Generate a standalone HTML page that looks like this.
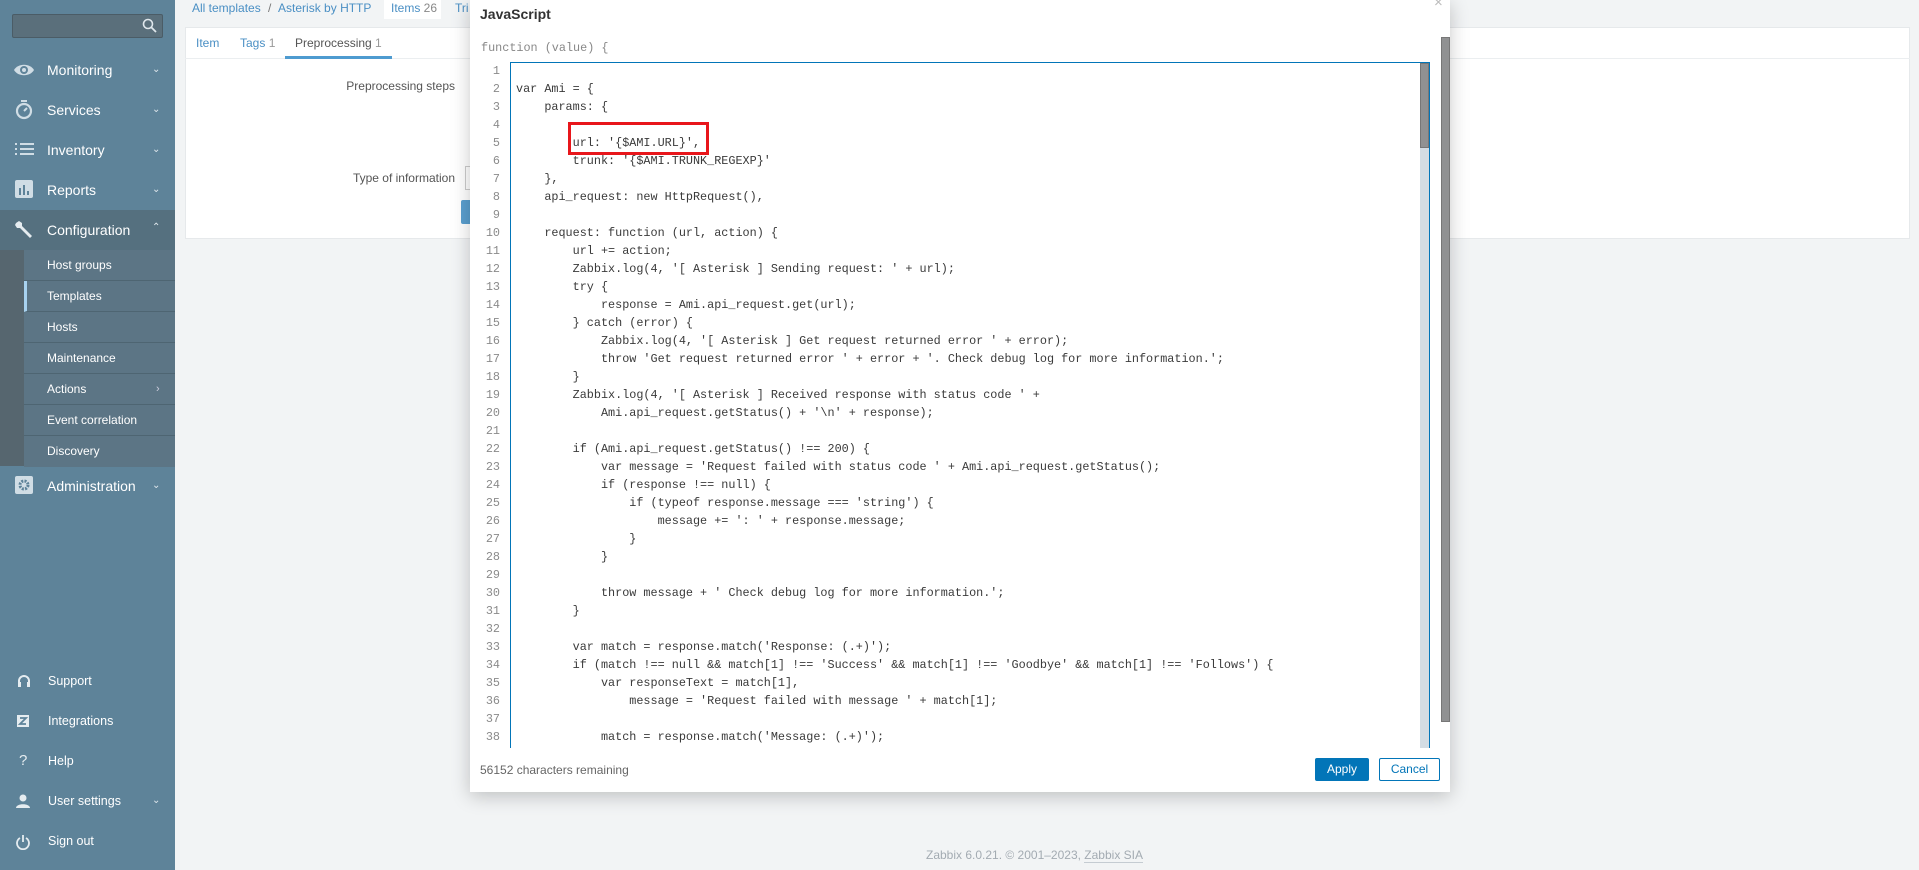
<!DOCTYPE html>
<html><head><meta charset="utf-8"><style>
*{box-sizing:border-box;margin:0;padding:0}
body{width:1919px;height:870px;overflow:hidden;background:#f2f4f5;font-family:"Liberation Sans",Arial,sans-serif;position:relative}
.a{position:absolute}
#side{left:0;top:0;width:175px;height:870px;background:#5e8399}
.mi{position:absolute;left:0;width:175px;height:40px;color:#fff;font-size:14px;line-height:40px}
.mi .t{position:absolute;left:47px}
.mi .ch{position:absolute;left:152px;font-size:10px;color:#dfe7ec}
.mi svg{position:absolute;left:13px;top:10px}
.sub{position:absolute;left:24px;width:151px;height:31px;line-height:30px;color:#fff;font-size:12px;padding-left:23px;border-bottom:1px solid #4e6572;background:#5c7585}
.bi{position:absolute;left:0;width:175px;height:40px;line-height:40px;color:#fff;font-size:12.5px}
.bi .t{position:absolute;left:48px}
.bi svg{position:absolute;left:16px;top:13px}
pre{font-family:"Liberation Mono","Courier New",monospace;font-size:11.8px;line-height:18px}
</style></head><body>
<div id="side" class="a">
 <div class="a" style="left:12px;top:14px;width:151px;height:24px;background:#5a6f7b;border:1px solid #4b5c66;border-radius:2px"></div>
 <svg class="a" style="left:142px;top:18px" width="15" height="15" viewBox="0 0 15 15"><circle cx="6" cy="6" r="4.5" fill="none" stroke="#dfe7ec" stroke-width="1.6"/><path d="M9.5 9.5L14 14" stroke="#dfe7ec" stroke-width="1.8"/></svg>
 <div class="mi" style="top:50px"><svg width="22" height="20" viewBox="0 0 22 20"><path d="M1 10C5 3 17 3 21 10C17 17 5 17 1 10Z" fill="#d0dde5"/><circle cx="11" cy="10" r="4" fill="#5e8399"/><circle cx="11" cy="10" r="2" fill="#d0dde5"/></svg><span class="t">Monitoring</span><span class="ch">&#8964;</span></div>
 <div class="mi" style="top:90px"><svg width="22" height="20" viewBox="0 0 22 20"><circle cx="11" cy="11" r="7" fill="none" stroke="#d0dde5" stroke-width="2.2"/><path d="M8 1h6M11 11l3-3" stroke="#d0dde5" stroke-width="2"/></svg><span class="t">Services</span><span class="ch">&#8964;</span></div>
 <div class="mi" style="top:130px"><svg width="22" height="20" viewBox="0 0 22 20"><path d="M2 4h2M2 9h2M2 14h2M7 4h14M7 9h14M7 14h14" stroke="#d0dde5" stroke-width="2"/></svg><span class="t">Inventory</span><span class="ch">&#8964;</span></div>
 <div class="mi" style="top:170px"><svg width="22" height="20" viewBox="0 0 22 20"><rect x="2" y="0" width="18" height="18" rx="2" fill="#d0dde5"/><path d="M7 8v7M11 5v10M15 11v4" stroke="#5e8399" stroke-width="2"/></svg><span class="t">Reports</span><span class="ch">&#8964;</span></div>
 <div class="mi" style="top:210px;background:#55707f"><svg width="22" height="20" viewBox="0 0 22 20"><path d="M3 3l3-2 3 2v3l10 10-2 2L7 8H4L2 5z" fill="#e5ecf0"/></svg><span class="t">Configuration</span><span class="ch" style="top:-2px">&#8963;</span></div>
 <div class="a" style="left:0;top:250px;width:24px;height:216px;background:#56666f"></div>
 <div class="sub" style="top:250px">Host groups</div>
 <div class="sub" style="top:281px;border-left:3px solid #a8d2ef;padding-left:20px">Templates</div>
 <div class="sub" style="top:312px">Hosts</div>
 <div class="sub" style="top:343px">Maintenance</div>
 <div class="sub" style="top:374px">Actions<span style="position:absolute;left:132px;font-size:11px;color:#ccd">&rsaquo;</span></div>
 <div class="sub" style="top:405px">Event correlation</div>
 <div class="sub" style="top:436px;border-bottom:none">Discovery</div>
 <div class="mi" style="top:466px"><svg width="22" height="20" viewBox="0 0 22 20"><rect x="2" y="0" width="18" height="18" rx="2" fill="#d0dde5"/><circle cx="11" cy="9" r="4" fill="none" stroke="#5e8399" stroke-width="3" stroke-dasharray="2 1.2"/></svg><span class="t">Administration</span><span class="ch">&#8964;</span></div>
 <div class="bi" style="top:661px"><svg width="16" height="16" viewBox="0 0 16 16"><path d="M3 11V7a5 5 0 0 1 10 0v4" fill="none" stroke="#e5ecf0" stroke-width="2"/><rect x="2" y="8" width="3" height="5" fill="#e5ecf0"/><rect x="11" y="8" width="3" height="5" fill="#e5ecf0"/></svg><span class="t">Support</span></div>
 <div class="bi" style="top:701px"><svg width="16" height="16" viewBox="0 0 16 16"><rect x="1" y="1" width="12" height="12" fill="#e5ecf0"/><path d="M4 4h6L4 10h6" fill="none" stroke="#5e8399" stroke-width="1.8"/></svg><span class="t">Integrations</span></div>
 <div class="bi" style="top:741px"><span style="position:absolute;left:19px;font-size:15px;color:#e5ecf0">?</span><span class="t">Help</span></div>
 <div class="bi" style="top:781px"><svg width="16" height="16" viewBox="0 0 16 16"><circle cx="7" cy="4" r="3.5" fill="#e5ecf0"/><path d="M0 14c0-5 14-5 14 0z" fill="#e5ecf0"/></svg><span class="t">User settings</span><span style="position:absolute;left:152px;font-size:10px;color:#dfe7ec">&#8964;</span></div>
 <div class="bi" style="top:821px"><svg width="16" height="16" viewBox="0 0 16 16"><path d="M4 4a6 6 0 1 0 6 0" fill="none" stroke="#e5ecf0" stroke-width="1.8"/><path d="M7 1v7" stroke="#e5ecf0" stroke-width="1.8"/></svg><span class="t">Sign out</span></div>
</div>

<div class="a" style="left:192px;top:1px;font-size:12px;color:#4a8fc4">All templates <span style="color:#777;margin:0 4px">/</span> Asterisk by HTTP</div>
<div class="a" style="left:384px;top:0;width:57px;height:19px;background:#fff;font-size:12px;color:#4a8fc4;padding:1px 0 0 7px">Items <span style="color:#888">26</span></div>
<div class="a" style="left:455px;top:1px;font-size:12px;color:#4a8fc4">Tri</div>
<div class="a" style="left:185px;top:27px;width:1725px;height:212px;background:#fff;border:1px solid #e6e9eb"></div>
<div class="a" style="left:185px;top:58px;width:1725px;height:1px;background:#ebeef0"></div>
<div class="a" style="left:196px;top:36px;font-size:12px;color:#4a8fc4">Item</div>
<div class="a" style="left:240px;top:36px;font-size:12px;color:#4a8fc4">Tags <span style="color:#999">1</span></div>
<div class="a" style="left:295px;top:36px;font-size:12px;color:#555">Preprocessing <span style="color:#999">1</span></div>
<div class="a" style="left:285px;top:56px;width:107px;height:3px;background:#4e9bd0"></div>
<div class="a" style="left:300px;top:79px;width:155px;text-align:right;font-size:12px;color:#555">Preprocessing steps</div>
<div class="a" style="left:300px;top:171px;width:155px;text-align:right;font-size:12px;color:#555">Type of information</div>
<div class="a" style="left:465px;top:166px;width:10px;height:24px;border:1px solid #ccc;border-right:none"></div>
<div class="a" style="left:461px;top:200px;width:12px;height:24px;background:#5a9fcf;border-radius:2px 0 0 2px"></div>

<div class="a" style="left:926px;top:848px;font-size:12px;color:#a3abb2">Zabbix 6.0.21. © 2001–2023, <span style="border-bottom:1px solid #c5ccd2">Zabbix SIA</span></div>

<div class="a" style="left:470px;top:0;width:980px;height:792px;background:#fff;box-shadow:0 4px 18px rgba(0,0,0,.22)">
 <div class="a" style="left:10px;top:6px;font-size:14px;font-weight:bold;color:#333">JavaScript</div>
 <div class="a" style="left:964px;top:-6px;font-size:15px;color:#bbb">×</div>
 <pre class="a" style="left:11px;top:39px;color:#888">function (value) {</pre>
 <pre class="a" style="left:0;top:62px;width:30px;text-align:right;color:#8a8a8a">1
2
3
4
5
6
7
8
9
10
11
12
13
14
15
16
17
18
19
20
21
22
23
24
25
26
27
28
29
30
31
32
33
34
35
36
37
38</pre>
 <div class="a" style="left:40px;top:62px;width:920px;height:686px;border:1px solid #0275b8;border-bottom:none;overflow:hidden">
  <div class="a" style="right:0;top:0;width:9px;height:686px;background:#d3dce3"></div>
  <div class="a" style="right:0;top:0;width:9px;height:85px;background:#909192;border:1px solid #777"></div>
<pre class="a" style="left:5px;top:-1px;color:#3a3a3a">

var Ami = {
    params: {

        url: '{$AMI.URL}',
        trunk: '{$AMI.TRUNK_REGEXP}'
    },
    api_request: new HttpRequest(),

    request: function (url, action) {
        url += action;
        Zabbix.log(4, '[ Asterisk ] Sending request: ' + url);
        try {
            response = Ami.api_request.get(url);
        } catch (error) {
            Zabbix.log(4, '[ Asterisk ] Get request returned error ' + error);
            throw 'Get request returned error ' + error + '. Check debug log for more information.';
        }
        Zabbix.log(4, '[ Asterisk ] Received response with status code ' +
            Ami.api_request.getStatus() + '\n' + response);

        if (Ami.api_request.getStatus() !== 200) {
            var message = 'Request failed with status code ' + Ami.api_request.getStatus();
            if (response !== null) {
                if (typeof response.message === 'string') {
                    message += ': ' + response.message;
                }
            }

            throw message + ' Check debug log for more information.';
        }

        var match = response.match('Response: (.+)');
        if (match !== null &amp;&amp; match[1] !== 'Success' &amp;&amp; match[1] !== 'Goodbye' &amp;&amp; match[1] !== 'Follows') {
            var responseText = match[1],
                message = 'Request failed with message ' + match[1];

            match = response.match('Message: (.+)');</pre>
 </div>
 <div class="a" style="left:98px;top:122px;width:141px;height:33px;border:3px solid #e8161b"></div>
 <div class="a" style="left:971px;top:37px;width:9px;height:685px;background:#909192;border:1px solid #777"></div>
 <div class="a" style="left:10px;top:763px;font-size:12px;color:#666">56152 characters remaining</div>
 <div class="a" style="left:845px;top:758px;width:54px;height:23px;background:#0275b8;color:#fff;font-size:12px;text-align:center;line-height:23px;border-radius:2px">Apply</div>
 <div class="a" style="left:909px;top:758px;width:61px;height:23px;border:1px solid #0275b8;color:#0275b8;font-size:12px;text-align:center;line-height:21px;border-radius:2px">Cancel</div>
</div>
</body></html>
